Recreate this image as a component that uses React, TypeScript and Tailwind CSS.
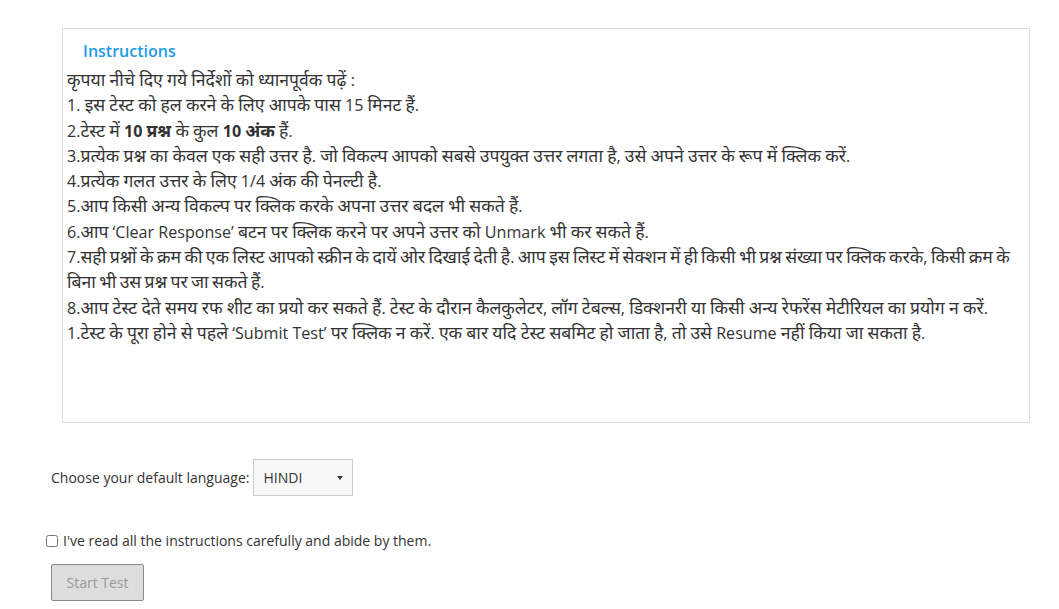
import React, { useState } from 'react';

// Devanagari in the fallback font runs small next to Open Sans, so those runs get their own size
const hi = (text: string) =>
    text.split(/([\u0900-\u097F]+)/).map((part, i) =>
        /[\u0900-\u097F]/.test(part) ? (
            <span key={i} className="text-[17.6px] leading-[20px]">
                {part}
            </span>
        ) : (
            part
        )
    );

const lines: React.ReactNode[] = [
    hi('कृपया नीचे दिए गये निर्देशों को ध्यानपूर्वक पढ़ें :'),
    hi('1. इस टेस्ट को हल करने के लिए आपके पास 15 मिनट हैं.'),
    <>
        {hi('2.टेस्ट में ')}
        <b>{hi('10 प्रश्न')}</b>
        {hi(' के कुल ')}
        <b>{hi('10 अंक')}</b>
        {hi(' हैं.')}
    </>,
    hi('3.प्रत्येक प्रश्न का केवल एक सही उत्तर है. जो विकल्प आपको सबसे उपयुक्त उत्तर लगता है, उसे अपने उत्तर के रूप में क्लिक करें.'),
    hi('4.प्रत्येक गलत उत्तर के लिए 1/4 अंक की पेनल्टी है.'),
    hi('5.आप किसी अन्य विकल्प पर क्लिक करके अपना उत्तर बदल भी सकते हैं.'),
    hi('6.आप ‘Clear Response’ बटन पर क्लिक करने पर अपने उत्तर को Unmark भी कर सकते हैं.'),
    <span className="[word-spacing:-0.8px]">
        {hi('7.सही प्रश्नों के क्रम की एक लिस्ट आपको स्क्रीन के दायें ओर दिखाई देती है. आप इस लिस्ट में सेक्शन में ही किसी भी प्रश्न संख्या पर क्लिक करके, किसी क्रम के बिना भी उस प्रश्न पर जा सकते हैं.')}
    </span>,
    hi('8.आप टेस्ट देते समय रफ शीट का प्रयो कर सकते हैं. टेस्ट के दौरान कैलकुलेटर, लॉग टेबल्स, डिक्शनरी या किसी अन्य रेफरेंस मेटीरियल का प्रयोग न करें.'),
    hi('1.टेस्ट के पूरा होने से पहले ‘Submit Test’ पर क्लिक न करें. एक बार यदि टेस्ट सबमिट हो जाता है, तो उसे Resume नहीं किया जा सकता है.'),
];

export default function App() {
    const [agreed, setAgreed] = useState(false);

    return (
        <div className="min-h-[609px] bg-white text-[#333] font-['Open_Sans','Noto_Sans',sans-serif]">
            {/* Instructions panel */}
            <div className="pt-[28px] pl-[62px] pr-[29px]">
                <div className="h-[395px] border border-[#ddd] pl-[4px] pr-[2px]">
                    <h3 className="pl-[16px] pt-[11px] pb-[6px] text-[16px] leading-[22px] font-semibold text-[#1e9be6]">
                        Instructions
                    </h3>
                    <div className="text-[16.1px] leading-[25.3px]">
                        {lines.map((l, i) => (
                            <div key={i}>{l}</div>
                        ))}
                    </div>
                </div>
            </div>

            {/* Language */}
            <div className="mt-[36px] pl-[51px] flex items-center gap-[4px] text-[14px]">
                <span>Choose your default language:</span>
                <button className="w-[100px] h-[37px] border border-[#ccc] bg-[#f8f8f8] flex items-center justify-between pl-[9px] pr-[9px] text-[14px] text-[#333]">
                    <span>HINDI</span>
                    <span className="w-0 h-0 border-l-[3.5px] border-r-[3.5px] border-t-[4px] border-l-transparent border-r-transparent border-t-[#333]"></span>
                </button>
            </div>

            {/* Agreement */}
            <label className="mt-[34px] pl-[46px] flex items-center gap-[5px] text-[14px]">
                <input
                    type="checkbox"
                    checked={agreed}
                    onChange={(e) => setAgreed(e.target.checked)}
                    className="w-[12px] h-[12px] m-0"
                />
                <span>I've read all the instructions carefully and abide by them.</span>
            </label>

            <div className="mt-[13px] pl-[51px]">
                <button
                    disabled={!agreed}
                    className="w-[93px] h-[37px] rounded-[2px] border border-[#8a8a8a] bg-[#ddd] text-[14px] text-[#999]"
                >
                    Start Test
                </button>
            </div>
        </div>
    );
}
